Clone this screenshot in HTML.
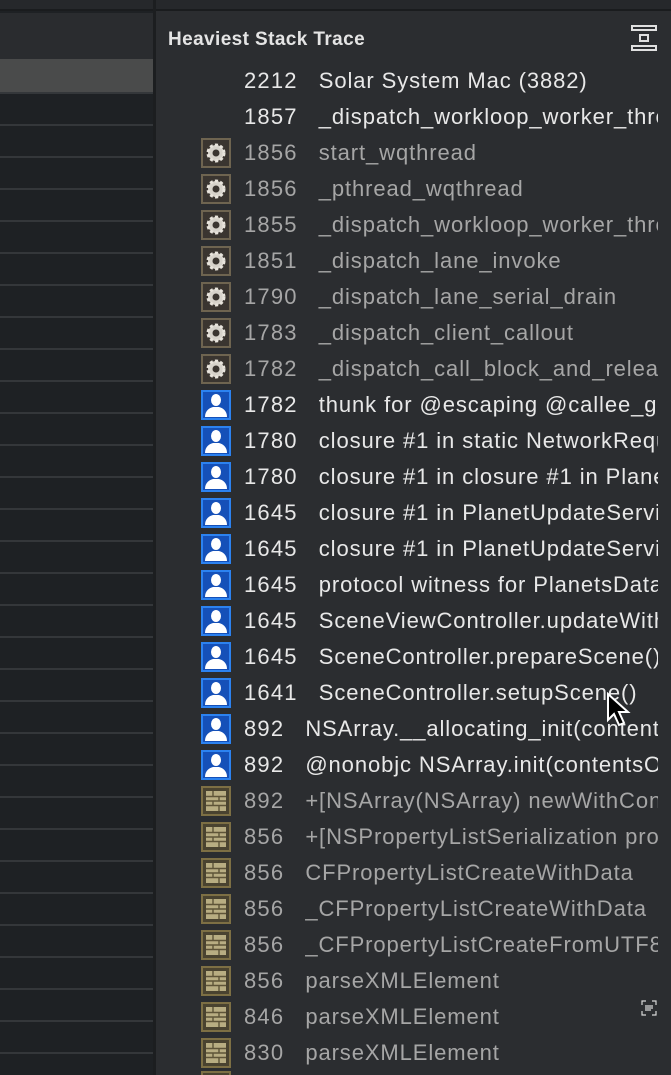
<!DOCTYPE html>
<html style="height:1075px;overflow:hidden"><head><meta charset="utf-8"><style>
*{margin:0;padding:0;box-sizing:border-box}
body{width:671px;height:1075px;overflow:hidden;background:#2b2d30;font-family:"Liberation Sans",sans-serif;position:relative}
#left{position:absolute;left:0;top:0;width:153px;height:1075px;background:#1e2124}
.top{position:absolute;left:0;top:0;width:671px;height:11px;background:#26282b;border-bottom:2px solid #1a1c1e}
.hl{position:absolute;left:0;width:153px;height:2px;background:#34373a}
#div{position:absolute;left:153px;top:0;width:3px;height:1075px;background:#1c1e20}
h1{position:absolute;left:168px;top:29px;font-size:19px;font-weight:bold;color:#e4e4e4;letter-spacing:0.4px}
.row{position:absolute;left:201px;height:36px;width:457px;overflow:hidden;white-space:nowrap;display:flex;align-items:center;font-size:22px;letter-spacing:0.9px}
.ic{width:30px;height:30px;flex:none;margin-right:13px}
.n{flex:none;margin-right:21px;letter-spacing:1.2px}
.w{color:#e8e8e8}.g{color:#a6a6a6}
</style></head><body>
<div id="left">
<div style="position:absolute;top:13px;left:0;width:153px;height:46px;background:#2a2c2f"></div>
<div style="position:absolute;top:59px;left:0;width:153px;height:33px;background:#4a4b4b"></div>
</div>
<div class="top"></div>
<div id="div"></div>
<h1>Heaviest Stack Trace</h1>
<svg style="position:absolute;left:630px;top:24px" width="28" height="28" viewBox="0 0 28 28" fill="none" stroke="#e0e0e0" stroke-width="2"><rect x="2" y="2" width="24" height="4"/><rect x="2" y="22" width="24" height="4"/><rect x="10" y="11" width="8" height="6"/></svg>
<svg style="position:absolute;left:641px;top:1000px" width="16" height="16" viewBox="0 0 16 16" fill="none" stroke="#d8d8d8" stroke-width="1.2"><path d="M1 5V1h4M11 1h4v4M15 11v4h-4M5 15H1v-4M4 6h8M4 8h8M4 10h6"/></svg>
<div id="rows"></div>
<svg style="position:absolute;left:606px;top:692px" width="26" height="36" viewBox="0 0 26 36"><path d="M2 2v26l6-6 5 11 5-2-5-11h9z" fill="#000" stroke="#fff" stroke-width="2"/></svg>
<script>
const G='<svg class="ic" viewBox="0 0 30 30"><rect x="1" y="1" width="28" height="28" fill="#3a3530" stroke="#6e6450" stroke-width="2"/><circle cx="15" cy="15" r="8" fill="#d6d2ca" stroke="#e8e4dc" stroke-width="3" stroke-dasharray="3 2.2"/><circle cx="15" cy="15" r="3.5" fill="#3a3530"/></svg>';
const P='<svg class="ic" viewBox="0 0 30 30"><rect x="1" y="1" width="28" height="28" fill="#1550b8" stroke="#2c82f0" stroke-width="2"/><path d="M10 10a5 6 0 0 1 10 0a5 6 0 0 1-10 0z" fill="#fff"/><path d="M4 27c0-6 4-9 8-10h6c4 1 8 4 8 10z" fill="#fff"/></svg>';
const B='<svg class="ic" viewBox="0 0 30 30"><rect x="1" y="1" width="28" height="28" fill="#4a4330" stroke="#7d6f44" stroke-width="2"/><rect x="5" y="5" width="20" height="20" fill="#b8ad82"/><path d="M5 10.5h20M5 15h20M5 19.5h20M12 5v5.5M18 10.5v4.5M12 15v4.5M18 19.5v5.5" stroke="#5e5438" stroke-width="1.4"/></svg>';
const N='<span class="ic"></span>';
const d=[[2212,N,'w','Solar System Mac (3882)'],[1857,N,'w','_dispatch_workloop_worker_thread'],
[1856,G,'g','start_wqthread'],[1856,G,'g','_pthread_wqthread'],[1855,G,'g','_dispatch_workloop_worker_thread'],
[1851,G,'g','_dispatch_lane_invoke'],[1790,G,'g','_dispatch_lane_serial_drain'],[1783,G,'g','_dispatch_client_callout'],
[1782,G,'g','_dispatch_call_block_and_release'],[1782,P,'w','thunk for @escaping @callee_guaranteed'],
[1780,P,'w','closure #1 in static NetworkRequest'],[1780,P,'w','closure #1 in closure #1 in PlanetUpdate'],
[1645,P,'w','closure #1 in PlanetUpdateService'],[1645,P,'w','closure #1 in PlanetUpdateService'],
[1645,P,'w','protocol witness for PlanetsDataSource'],[1645,P,'w','SceneViewController.updateWith'],
[1645,P,'w','SceneController.prepareScene()'],[1641,P,'w','SceneController.setupScene()'],
[892,P,'w','NSArray.__allocating_init(contentsOf:)'],[892,P,'w','@nonobjc NSArray.init(contentsOf:)'],
[892,B,'g','+[NSArray(NSArray) newWithContentsOf:]'],[856,B,'g','+[NSPropertyListSerialization propertyList]'],
[856,B,'g','CFPropertyListCreateWithData'],[856,B,'g','_CFPropertyListCreateWithData'],
[856,B,'g','_CFPropertyListCreateFromUTF8Data'],[856,B,'g','parseXMLElement'],[846,B,'g','parseXMLElement'],
[830,B,'g','parseXMLElement']];
let h='';
d.forEach((r,i)=>{h+=`<div class="row ${r[2]}" style="top:${63+36*i}px">${r[1]}<span class="n">${r[0]}</span><span>${r[3]}</span></div>`;});
h+=`<div class="row" style="top:1071px;height:4px;align-items:flex-start">${B}</div>`;
for(let y=92;y<1075;y+=32)h+=`<div class="hl" style="top:${y}px"></div>`;
document.getElementById('rows').innerHTML=h;
</script>
</body></html>
